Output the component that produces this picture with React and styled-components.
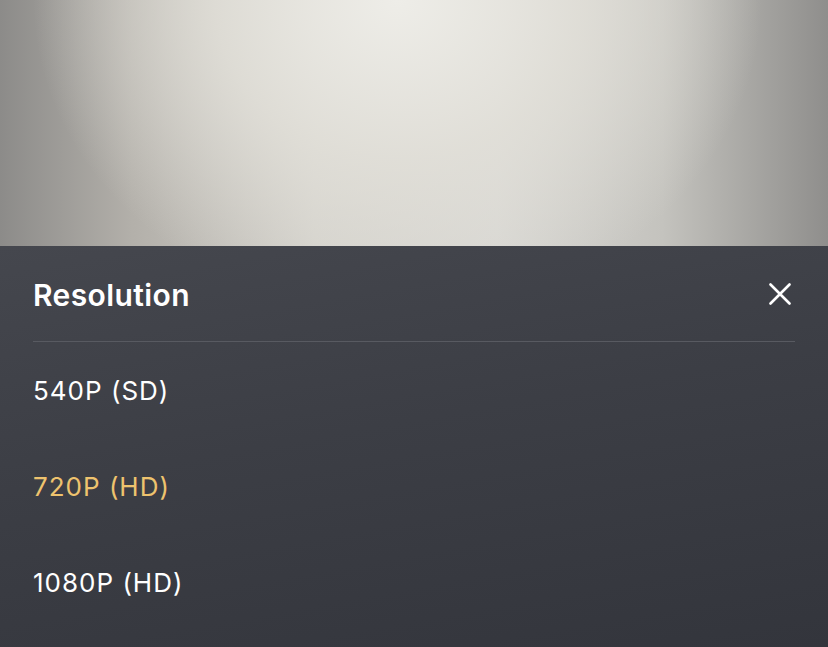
import styled, { createGlobalStyle } from 'styled-components';

const GlobalStyle = createGlobalStyle`
    html, body {
        margin: 0;
        padding: 0;
        background: #34363d;
    }
    body {
        font-family: Inter, "Noto Sans", sans-serif;
        -webkit-font-smoothing: antialiased;
    }
`;

/** Page -- video area on top, sheet below */
const Page = styled.div`
    width: 828px;
    height: 647px;
    display: flex;
    flex-direction: column;
    overflow: hidden;
`;

const VideoArea = styled.div`
    height: 246px;
    flex-shrink: 0;
    background:
        radial-gradient(ellipse 55% 160% at 48% 0%, rgba(238, 237, 232, 1) 0%, rgba(226, 224, 217, 0.85) 40%, rgba(205, 203, 197, 0) 80%),
        linear-gradient(90deg, #8c8b89 0%, #b3b0aa 16%, #d2d0ca 38%, #d7d6d2 60%, #c4c3be 80%, #8f8e8c 100%);
`;

/** Sheet -- Container */
const Sheet = styled.div`
    flex: 1;
    padding: 0 33px;
    background: linear-gradient(170deg, #45474e 0%, #3c3e45 45%, #33353c 100%);
    display: flex;
    flex-direction: column;
`;

const SheetHeader = styled.div`
    height: 95px;
    display: flex;
    align-items: center;
    justify-content: space-between;
    border-bottom: 1px solid #585a61;
`;

const SheetTitle = styled.h2`
    margin: 0;
    padding-top: 2px;
    font-size: 30px;
    font-weight: 600;
    color: #ffffff;
    letter-spacing: 0.4px;
`;

const CloseButton = styled.button`
    width: 22px;
    height: 22px;
    margin-right: 4px;
    padding: 0;
    border: 0;
    background: none;
    display: flex;
    cursor: pointer;
`;

const OptionList = styled.ul`
    list-style: none;
    margin: 0;
    padding: 0;
`;

const Option = styled.li`
    height: 96px;
    display: flex;
    align-items: center;
    font-size: 26px;
    font-weight: 400;
    letter-spacing: 1px;
    color: ${({ $active }) => ($active ? '#eec36e' : '#ffffff')};
`;

const options = [
    { label: '540P (SD)' },
    { label: '720P (HD)', active: true },
    { label: '1080P (HD)' },
];

export default function App() {
    return (
        <>
            <GlobalStyle />
            <Page>
                <VideoArea />
                <Sheet>
                    <SheetHeader>
                        <SheetTitle>Resolution</SheetTitle>
                        <CloseButton aria-label="Close">
                            <svg width="22" height="22" viewBox="0 0 22 22">
                                <path d="M1.5 1.5 L20.5 20.5 M20.5 1.5 L1.5 20.5" stroke="#fff" strokeWidth="2.6" strokeLinecap="round" />
                            </svg>
                        </CloseButton>
                    </SheetHeader>
                    <OptionList>
                        {options.map(o => (
                            <Option key={o.label} $active={o.active}>{o.label}</Option>
                        ))}
                    </OptionList>
                </Sheet>
            </Page>
        </>
    );
}
